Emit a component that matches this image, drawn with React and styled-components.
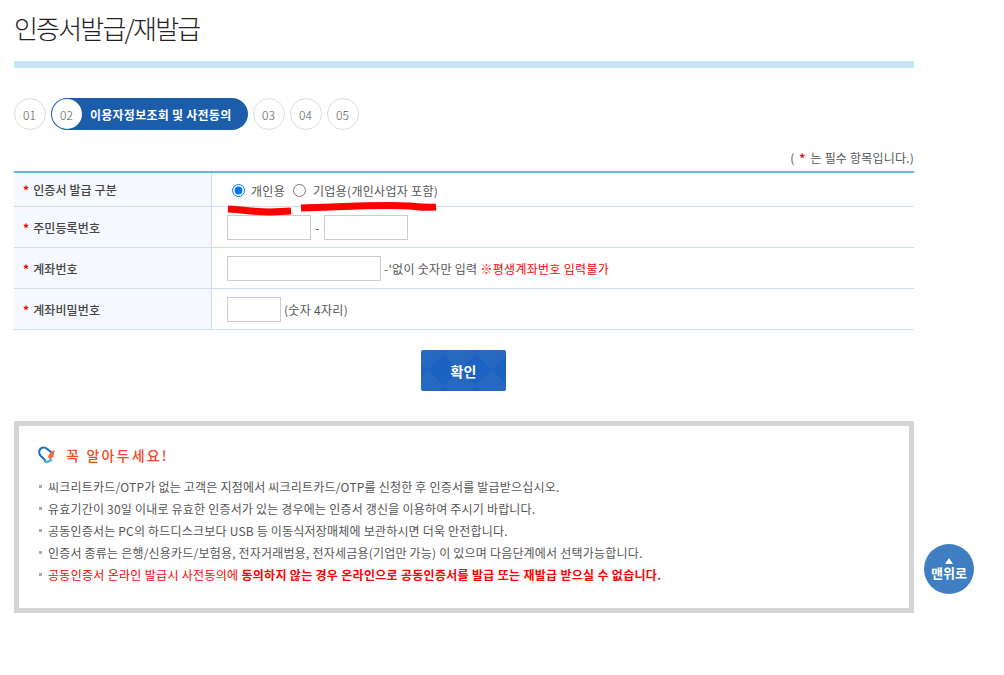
import React from "react";
import styled, { createGlobalStyle } from "styled-components";

const Global = createGlobalStyle`
  html, body { margin: 0; padding: 0; background: #fff; overflow: hidden; }
  body { font-family: "Noto Sans CJK KR", "Noto Sans", sans-serif; color: #555; }
  * { box-sizing: border-box; }
`;

const Page = styled.div`
  position: relative;
  width: 1004px;
  height: 675px;
  padding-left: 14px;
`;
const Content = styled.main`
  width: 900px;
  display: flex;
  flex-direction: column;
`;
const Title = styled.h1`
  margin: 0;
  height: 61px;
  padding-top: 8px;
  font-size: 26px;
  line-height: 40px;
  font-weight: 300;
  letter-spacing: -1.8px;
  color: #222;
`;
const TitleBar = styled.div`
  height: 7px;
  background: #c3e5f6;
`;
const Steps = styled.ol`
  list-style: none;
  margin: 30px 0 0;
  padding: 0;
  display: flex;
  gap: 5px;
  height: 32px;
`;
const Step = styled.li`
  width: 32px;
  height: 32px;
  border-radius: 50%;
  border: 1px solid #ddd;
  display: flex;
  align-items: center;
  justify-content: center;
  padding-right: 1px;
  font-size: 12px;
  font-weight: 300;
  color: #555;
`;
const ActiveStep = styled.li`
  width: 197px;
  height: 32px;
  border-radius: 16px;
  background: #1b5dab;
  display: flex;
  align-items: center;
  padding-left: 1px;
  color: #fff;
  font-size: 12px;
  font-weight: 700;
  letter-spacing: 0.25px;
`;
const ActiveNum = styled.span`
  width: 30px;
  height: 30px;
  border-radius: 50%;
  background: #fff;
  color: #555;
  font-weight: 300;
  letter-spacing: 0;
  display: flex;
  align-items: center;
  justify-content: center;
  padding-right: 1px;
  margin-right: 8px;
`;
const Note = styled.p`
  margin: 19px 0 0;
  height: 22px;
  line-height: 17px;
  text-align: right;
  font-size: 12px;
  letter-spacing: 0.2px;
`;
const Red = styled.span`
  color: #f00;
  font-weight: ${(p) => (p.$bold ? 700 : 400)};
`;
const NoteStar = styled(Red)`
  margin: 0 2px;
`;
const Table = styled.div`
  border-top: 2px solid #66b3e6;
`;
const Row = styled.div`
  display: grid;
  grid-template-columns: 198px 1fr;
  height: ${(p) => p.$h}px;
  border-bottom: 1px solid #d0dde8;
`;
const Head = styled.div`
  background: #f5f8fc;
  border-right: 1px solid #d0dde8;
  display: flex;
  align-items: center;
  padding-left: 9px;
  font-size: 12px;
  font-weight: 500;
  letter-spacing: 0.1px;
  color: #444;
`;
const Star = styled.span`
  color: #e00;
  font-weight: 700;
  margin-right: 4px;
`;
const Cell = styled.div`
  display: flex;
  align-items: center;
  padding-left: 15px;
  font-size: 12px;
  letter-spacing: 0.3px;
  color: #555;
`;
const RadioCell = styled(Cell)`
  padding-left: 20px;
  padding-top: 1px;
`;
const Radio = styled.input.attrs({ type: "radio", name: "kind" })`
  width: 13px;
  height: 13px;
  margin: 0 6px 0 0;
`;
const WideRadio = styled(Radio)`
  margin-right: 7px;
`;
const RadioLabel = styled.label`
  display: flex;
  align-items: center;
  margin-right: 8px;
`;
const Field = styled.input`
  width: ${(p) => p.$w}px;
  height: 25px;
  border: 1px solid #ccc;
  background: #fff;
  padding: 0;
  margin: 0;
  border-radius: 0;
  outline: none;
`;
const Dash = styled.span`
  width: 13px;
  text-align: center;
`;
const AfterText = styled.span`
  margin-left: 3px;
`;
const ButtonRow = styled.div`
  display: flex;
  justify-content: center;
  padding: 20px 0 30px 0;
`;
const Confirm = styled.button`
  width: 85px;
  height: 41px;
  margin-left: -1px;
  border: 0;
  border-radius: 2px;
  color: #fff;
  font-family: inherit;
  font-size: 14px;
  font-weight: 700;
  background-color: #1c62c2;
  background-image:
    linear-gradient(45deg, #2768c1 25%, transparent 25%, transparent 75%, #2768c1 75%),
    linear-gradient(135deg, #2768c1 25%, transparent 25%, transparent 75%, #2768c1 75%);
  background-size: 32px 32px;
  background-position: 6px 4px;
`;
const Notice = styled.section`
  height: 192px;
  border: 5px solid #d5d5d5;
  padding: 18px 19px 0;
`;
const NoticeHead = styled.h2`
  margin: 0 0 10px;
  display: flex;
  align-items: center;
  height: 22px;
  font-size: 14px;
  font-weight: 500;
  letter-spacing: 2.2px;
  color: #ef4723;
  gap: 10px;
`;
const List = styled.ul`
  list-style: none;
  margin: 0;
  padding: 0;
`;
const Item = styled.li`
  position: relative;
  height: 22px;
  line-height: 22px;
  padding-left: 10px;
  font-size: 12px;
  letter-spacing: ${(p) => (p.$red ? "0.3px" : "0.2px")};
  color: ${(p) => (p.$red ? "#f00" : "#555")};
  white-space: nowrap;
  &::before {
    content: "";
    position: absolute;
    left: 1px;
    top: 9px;
    width: 3px;
    height: 3px;
    background: #aaa;
  }
`;
const Marker = styled.svg`
  position: absolute;
  left: 220px;
  top: 198px;
  width: 230px;
  height: 22px;
  pointer-events: none;
`;
const TopButton = styled.a`
  position: absolute;
  left: 924px;
  top: 544px;
  width: 50px;
  height: 50px;
  border-radius: 50%;
  background: #3f7fc1;
  color: #fff;
  font-size: 13px;
  font-weight: 700;
  display: flex;
  flex-direction: column;
  align-items: center;
  justify-content: center;
  line-height: 14px;
  &::before {
    content: "";
    width: 0;
    height: 0;
    border-left: 4px solid transparent;
    border-right: 4px solid transparent;
    border-bottom: 6px solid #fff;
    margin-bottom: 2px;
  }
`;

const Bell = () => (
  <svg width="18" height="18" viewBox="0 0 18 18" fill="none">
    <path d="M7 14 L2.8 10 C0.5 7.5 0.8 4 3 2.4 C5 1 7.5 1.4 9.5 3.2 L13.5 6.5" stroke="#1f6fc0" strokeWidth="2" strokeLinecap="round" />
    <path d="M13 5.5 L16.5 4 L15.5 11 L11.5 13.5 L10 10.5 Z" fill="#f0694a" />
    <path d="M7 15.5 C9 16.5 11 15.5 13 14" stroke="#3fb6c9" strokeWidth="2.4" strokeLinecap="round" />
  </svg>
);

export default function App() {
  return (
    <Page>
      <Global />
      <Content>
        <Title>인증서발급/재발급</Title>
        <TitleBar />
        <Steps>
          <Step>01</Step>
          <ActiveStep>
            <ActiveNum>02</ActiveNum>이용자정보조회 및 사전동의
          </ActiveStep>
          <Step>03</Step>
          <Step>04</Step>
          <Step>05</Step>
        </Steps>
        <Note>
          ( <NoteStar $bold>*</NoteStar> 는 필수 항목입니다.)
        </Note>
        <Table>
          <Row $h={34}>
            <Head><Star>*</Star>인증서 발급 구분</Head>
            <RadioCell>
              <RadioLabel><Radio defaultChecked />개인용</RadioLabel>
              <RadioLabel><WideRadio />기업용(개인사업자 포함)</RadioLabel>
            </RadioCell>
          </Row>
          <Row $h={41}>
            <Head><Star>*</Star>주민등록번호</Head>
            <Cell>
              <Field $w={84} />
              <Dash>-</Dash>
              <Field $w={84} />
            </Cell>
          </Row>
          <Row $h={41}>
            <Head><Star>*</Star>계좌번호</Head>
            <Cell>
              <Field $w={154} />
              <AfterText>-'없이 숫자만 입력 <Red>※평생계좌번호 입력불가</Red></AfterText>
            </Cell>
          </Row>
          <Row $h={41}>
            <Head><Star>*</Star>계좌비밀번호</Head>
            <Cell>
              <Field $w={54} />
              <AfterText>(숫자 4자리)</AfterText>
            </Cell>
          </Row>
        </Table>
        <ButtonRow><Confirm>확인</Confirm></ButtonRow>
        <Notice>
          <NoticeHead><Bell />꼭 알아두세요!</NoticeHead>
          <List>
            <Item>씨크리트카드/OTP가 없는 고객은 지점에서 씨크리트카드/OTP를 신청한 후 인증서를 발급받으십시오.</Item>
            <Item>유효기간이 30일 이내로 유효한 인증서가 있는 경우에는 인증서 갱신을 이용하여 주시기 바랍니다.</Item>
            <Item>공동인증서는 PC의 하드디스크보다 USB 등 이동식저장매체에 보관하시면 더욱 안전합니다.</Item>
            <Item>인증서 종류는 은행/신용카드/보험용, 전자거래범용, 전자세금용(기업만 가능) 이 있으며 다음단계에서 선택가능합니다.</Item>
            <Item $red>공동인증서 온라인 발급시 사전동의에 <Red $bold>동의하지 않는 경우 온라인으로 공동인증서를 발급 또는 재발급 받으실 수 없습니다.</Red></Item>
          </List>
        </Notice>
      </Content>
      <Marker viewBox="0 0 230 22" fill="none">
        <path d="M8 11 C25 12 35 14 50 14 L71 13" stroke="#f00" strokeWidth="7" />
        <path d="M81 10 C120 9 160 6 190 8 C200 9 205 10 216 9" stroke="#f00" strokeWidth="7" />
      </Marker>
      <TopButton>맨위로</TopButton>
    </Page>
  );
}
